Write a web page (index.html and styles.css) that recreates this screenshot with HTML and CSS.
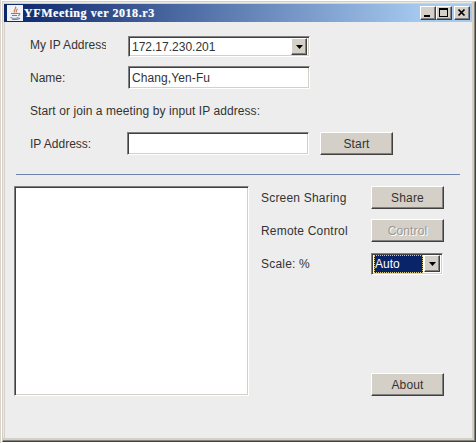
FILE: index.html
```html
<!DOCTYPE html>
<html lang="en">
<head>
<meta charset="utf-8">
<title>YFMeeting ver 2018.r3</title>
<link rel="stylesheet" href="styles.css">
</head>
<body>
<div class="window">
  <header class="titlebar">
    <svg class="logo" width="16" height="16" viewBox="0 0 16 16">
      <rect width="16" height="16" fill="#eef1f5"/>
      <path d="M8.5 1.5C10 3.5 6 4.5 7.5 7.5M10.5 4C8.5 5 9 6 9.3 7.5" fill="none" stroke="#d87842" stroke-width="1.2"/>
      <path d="M4 8.5h7M5 10.5h5M11 8.7c3-1 2 1.8 0 2M3.5 12.5c2 1 6 1 8 0M5 14.3c3 .5 6 .2 8-1" fill="none" stroke="#6685a5" stroke-width="1.1"/>
    </svg>
    <h1 class="title">YFMeeting ver 2018.r3</h1>
    <div class="controls">
      <span class="ctl"><svg width="14" height="12"><path d="M3 8h6v2H3z"/></svg></span>
      <span class="ctl"><svg width="14" height="12"><path d="M2 1h9v9H2zM3 3v6h7V3z" fill-rule="evenodd"/></svg></span>
      <span class="ctl close"><svg width="14" height="12"><path d="M3.5 2.5l6 6M9.5 2.5l-6 6" stroke="#000" stroke-width="1.7"/></svg></span>
    </div>
  </header>
  <section class="form">
    <div class="row">
      <span class="label clipped">My IP Address</span>
      <div class="field combo"><span class="value">172.17.230.201</span><span class="arrow"><svg width="7" height="4"><path d="M0 0h7L3.5 4z"/></svg></span></div>
    </div>
    <div class="row name-row">
      <span class="label">Name:</span>
      <div class="field"><span class="value name">Chang,Yen-Fu</span></div>
    </div>
    <p class="hint">Start or join a meeting by input IP address:</p>
    <div class="row ip-row">
      <span class="label ip">IP Address:</span>
      <div class="field"></div>
      <div class="button">Start</div>
    </div>
  </section>
  <div class="divider"></div>
  <section class="meeting">
    <div class="list"></div>
    <div class="options">
      <span class="sharing">Screen Sharing</span><div class="button">Share</div>
      <span class="remote">Remote Control</span><div class="button disabled">Control</div>
      <span class="scale">Scale: %</span>
      <div class="field combo small"><span class="value selected">Auto</span><span class="arrow"><svg width="7" height="4"><path d="M0 0h7L3.5 4z"/></svg></span></div>
      <div class="button about">About</div>
    </div>
  </section>
</div>
</body>
</html>
```
FILE: styles.css
```css
* { box-sizing: border-box; }
body {
  margin: 0;
  width: 476px;
  height: 443px;
  overflow: hidden;
  background: #fff;
  font: 12px/16px "Liberation Sans", Arial, sans-serif;
  color: #333;
  border-left: 1px solid #d8d4cb;
}
svg { display: block; }
.window {
  width: 474px;
  height: 441px;
  margin: 1px 0 0 1px;
  border: 1px solid #d4d0c8;
  border-right-color: #404040;
  border-bottom-color: #404040;
  background: #ededed;
  box-shadow: inset -1px -1px #85837e, inset -3px -3px #d4d0c8, inset 1px 1px #ece9e2, inset 2px 2px #d4d0c8;
  padding: 2px 3px 3px 1px;
}
.titlebar {
  display: flex;
  align-items: center;
  height: 18px;
  background: linear-gradient(90deg, #0a246a, #a6caf0 90%);
}
.logo { margin: 0 0 0 3px; }
.title {
  margin: 0 auto 0 1px;
  font: bold 12px/18px "Liberation Serif", "Times New Roman", serif;
  letter-spacing: .57px;
  color: #fff;
  -webkit-text-stroke: .2px #fff;
  white-space: nowrap;
}
.controls { display: flex; margin-right: 2px; }
.ctl {
  width: 16px;
  height: 14px;
  padding: 1px;
  background: #d4d0c8;
  border: 1px solid;
  border-color: #fff #404040 #404040 #fff;
  box-shadow: inset -1px -1px #808080;
}
.ctl svg { margin: -1px; }
.close { margin-left: 2px; }
.form { padding: 14px 0 0 26px; }
.row { display: flex; align-items: center; }
.label { width: 98px; white-space: nowrap; }
.clipped { width: 76px; margin: -4px 22px 0 0; overflow: hidden; }
.ip { width: 97px; }
.field {
  width: 182px;
  height: 23px;
  display: flex;
  align-items: center;
  background: #fff;
  border: 1px solid;
  border-color: #808080 #fff #fff #808080;
  box-shadow: inset 1px 1px #404040, inset -1px -1px #d4d0c8;
}
.combo { height: 21px; padding: 2px; }
.value { flex: 1; padding-left: 3px; letter-spacing: 0; }
.name { letter-spacing: .1px; }
.combo .value { padding-left: 1px; }
.name-row { margin-top: 9px; }
.hint { margin: 14px 0 13px; white-space: nowrap; letter-spacing: .08px; }
.arrow {
  width: 16px;
  height: 17px;
  display: grid;
  place-items: center;
  background: #d4d0c8;
  border: 1px solid;
  border-color: #fff #404040 #404040 #fff;
  box-shadow: inset -1px -1px #808080;
}
.button {
  width: 73px;
  height: 23px;
  background: #d4d0c8;
  border: 1px solid;
  border-color: #fff #404040 #404040 #fff;
  box-shadow: inset -1px -1px #808080;
  text-align: center;
  line-height: 22px;
  letter-spacing: .15px;
}
.row .button { margin-left: 11px; }
.divider { height: 1px; margin: 19px 12px 11px; background: #6e84af; }
.meeting { display: flex; padding-left: 10px; }
.list {
  width: 235px;
  height: 210px;
  margin-right: 12px;
  background: #fff;
  border: 1px solid;
  border-color: #808080 #fff #fff #808080;
  box-shadow: inset 1px 1px #404040, inset -1px -1px #d4d0c8;
}
.options {
  display: grid;
  grid-template-columns: 110px 74px;
  grid-template-rows: 23px 23px 23px 1fr;
  row-gap: 10px;
  align-items: center;
  white-space: nowrap;
  letter-spacing: .2px;
}
.disabled { color: #999; text-shadow: 1px 1px #fff; }
.small { width: 72px; height: 22px; }
.combo.small .value {
  height: 18px;
  margin-right: 1px;
  padding: 0;
  line-height: 16px;
  color: #fff;
  background: #0a246a;
  border: 1px dotted #d8c888;
}
.about { grid-column: 2; align-self: end; }
```
